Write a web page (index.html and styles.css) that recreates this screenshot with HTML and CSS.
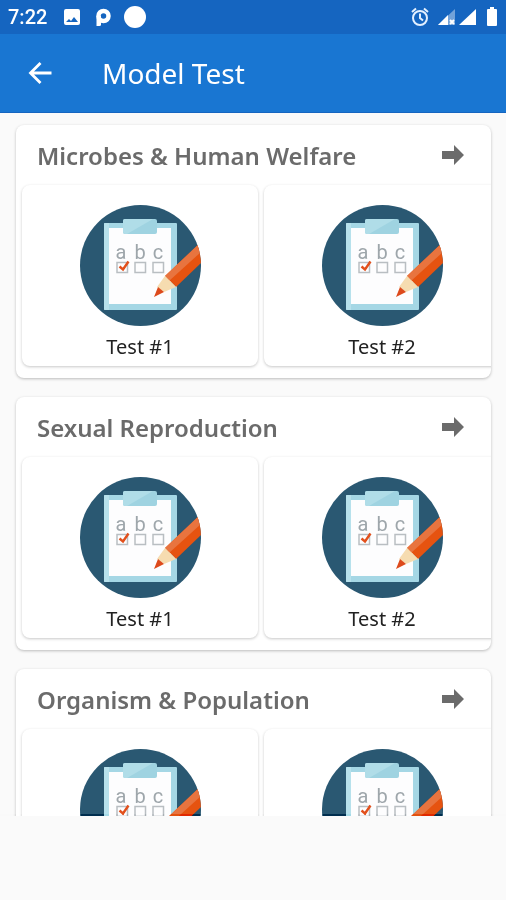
FILE: index.html
```html
<!DOCTYPE html>
<html lang="en">
<head>
  <meta charset="utf-8" />
  <meta name="viewport" content="width=device-width, initial-scale=1" />
  <meta name="theme-color" content="#1565c0" />
  <title>Model Test</title>
  <link rel="stylesheet" href="styles.css">
</head>
<body>
  <div class="status-bar">
    <span class="clock">7:22</span>
    <svg class="status-left" width="84" height="22" viewBox="0 0 84 22" fill="#fff" aria-hidden="true">
      <path fill-rule="evenodd" d="M2 3h12q2 0 2 2v12q0 2-2 2H2q-2 0-2-2V5q0-2 2-2zm0 13h12l-4-5-3 4-2-2z" />
      <circle cx="39.500" cy="10" r="5" fill="none" stroke="#fff" stroke-width="4.500" />
      <path d="M32.500 10h4.500v8.500q0 1.500-1.500 1.500h-3z" />
      <circle cx="71" cy="11" r="11" />
    </svg>
    <svg class="status-right" width="88" height="22" viewBox="0 0 88 22" fill="#fff" aria-hidden="true">
      <g fill="none" stroke="#e3f0ff" stroke-width="2">
        <circle cx="10" cy="12" r="7" />
        <path d="M10 7.500V12l3 2.500M2 6l4-3.500M18 6l-4-3.500" />
      </g>
      <path d="M28 19L45 3v16z" opacity=".4" />
      <path d="M28 19l10-10v10z" />
      <path d="M40 14l4 4m0-4l-4 4" stroke="#fff" stroke-width="2" />
      <path d="M49 19L66 3v16z" />
      <path d="M78 3h2V1h4v2h2q1 0 1 1v15q0 1-1 1h-8q-1 0-1-1V4q0-1 1-1z" />
    </svg>
  </div>

  <header class="app-bar">
    <button class="back" aria-label="Back">
      <svg width="24" height="24" viewBox="0 0 24 24" fill="none" stroke="#fff" stroke-width="2.800" aria-hidden="true">
        <path d="M23.500 12H3M12.500 2l-10 10 10 10" />
      </svg>
    </button>
    <h1>Model Test</h1>
  </header>

  <main class="list">
    <section class="card">
      <div class="card-head">
        <h2>Microbes &amp; Human Welfare</h2>
        <button class="go" aria-label="All Microbes &amp; Human Welfare tests">
          <svg viewBox="0 0 22 20"><path id="icon-go" d="M0 6h12V0l10 10-10 10v-6H0z" fill="#6b6b6b" /></svg>
        </button>
      </div>
      <div class="tests">
        <a class="test" href="#">
          <!-- Drawn once here, reused by the other tests -->
          <svg viewBox="0 0 121 121">
            <clipPath id="disc"><circle cx="60.500" cy="60.500" r="60.500" /></clipPath>
            <g id="icon-test" clip-path="url(#disc)">
              <rect width="121" height="121" fill="#2a5872" />
              <rect x="24" y="18" width="73" height="87" rx="1" fill="#a5d7e5" />
              <path d="M24 104V19q0-1 1-1h4v87h-4q-1 0-1-1z" fill="#b7e1ec" />
              <rect x="29" y="23" width="62" height="76" fill="#fdfdfe" />
              <rect x="43" y="14" width="34" height="15" rx="2" fill="#9fd3e1" />
              <path d="M43 27V16q0-2 2-2h28L47 29h-2q-2 0-2-2z" fill="#b0dde8" />
              <g class="letters">
                <text x="41" y="54">a</text>
                <text x="60" y="54">b</text>
                <text x="78" y="54">c</text>
              </g>
              <g fill="none" stroke="#b9bec2" stroke-width="1.500">
                <rect x="37" y="57.500" width="10.500" height="10" />
                <rect x="55" y="57.500" width="10.500" height="10" />
                <rect x="73" y="57.500" width="10.500" height="10" />
              </g>
              <path d="M39.500 61.500l3.500 3 5.500-8" fill="none" stroke="#e2501c" stroke-width="2.400" />
              <path d="M85 71l36-34v21L96 82z" fill="#e65310" />
              <path d="M85 71l36-34v10L89 76z" fill="#e8743f" />
              <path d="M85 71l11 11-12 5-7-5z" fill="#f6dcb0" />
              <path d="M78 82l6 5-10 5z" fill="#dd4a1c" />
            </g>
          </svg>
          <span>Test #1</span>
        </a>
        <a class="test" href="#"><svg viewBox="0 0 121 121"><use href="#icon-test" /></svg><span>Test #2</span></a>
      </div>
    </section>

    <section class="card">
      <div class="card-head">
        <h2>Sexual Reproduction</h2>
        <button class="go" aria-label="All Sexual Reproduction tests">
          <svg viewBox="0 0 22 20"><use href="#icon-go" /></svg>
        </button>
      </div>
      <div class="tests">
        <a class="test" href="#"><svg viewBox="0 0 121 121"><use href="#icon-test" /></svg><span>Test #1</span></a>
        <a class="test" href="#"><svg viewBox="0 0 121 121"><use href="#icon-test" /></svg><span>Test #2</span></a>
      </div>
    </section>

    <section class="card">
      <div class="card-head">
        <h2>Organism &amp; Population</h2>
        <button class="go" aria-label="All Organism &amp; Population tests">
          <svg viewBox="0 0 22 20"><use href="#icon-go" /></svg>
        </button>
      </div>
      <div class="tests">
        <a class="test" href="#"><svg viewBox="0 0 121 121"><use href="#icon-test" /></svg></a>
        <a class="test" href="#"><svg viewBox="0 0 121 121"><use href="#icon-test" /></svg></a>
      </div>
    </section>
  </main>

  <div class="banner"></div>
</body>
</html>
```
FILE: styles.css
```css
* {
  box-sizing: border-box;
}

body {
  margin: 0;
  height: 100vh;
  display: flex;
  flex-direction: column;
  background-color: #fafafa;
  font-family: 'Noto Sans', 'Open Sans', sans-serif;
}

h1, h2 {
  margin: 0;
}

button {
  padding: 0;
  border: none;
  background: none;
  cursor: pointer;
}

.status-bar {
  flex: none;
  height: 34px;
  display: flex;
  align-items: center;
  padding: 0 8px;
  background-color: #1565c0;
  color: #fff;
}

.clock {
  font-family: Roboto, sans-serif;
  font-size: 20px;
  font-weight: 500;
}

.status-left {
  margin-left: 17px;
}

.status-right {
  margin-left: auto;
}

.app-bar {
  flex: none;
  height: 79px;
  display: flex;
  align-items: center;
  padding: 0 28px;
  gap: 50px;
  background-color: #1976d2;
  border-bottom: 1px solid #1565c0;
}

.back {
  display: flex;
}

.app-bar h1 {
  color: #fff;
  font-size: 28px;
  font-weight: 400;
}

.list {
  flex: 1;
  min-height: 0;
  overflow: hidden;
  padding: 12px 15px 0 16px;
  position: relative;
}

/* dark edge where the list is cut off above the banner */
.list::after {
  content: "";
  position: absolute;
  left: 0;
  right: 0;
  bottom: 0;
  height: 2px;
  background-color: #ccc;
  mix-blend-mode: color-burn;
}

.card {
  margin-bottom: 19px;
  padding-bottom: 12px;
  border-radius: 8px;
  background-color: #fff;
  box-shadow: 0 1px 3px rgba(0, 0, 0, 0.25);
  overflow: hidden;
}

.card-head {
  height: 60px;
  display: flex;
  align-items: center;
  justify-content: space-between;
  padding: 0 27px 0 21px;
}

.card-head h2 {
  color: #6b6b6b;
  font-size: 24px;
  font-weight: 600;
}

.go {
  display: flex;
}

.go svg {
  width: 22px;
  height: 20px;
}

.tests {
  display: flex;
  gap: 6px;
  padding-left: 6px;
}

.test {
  flex: none;
  width: 236px;
  height: 181px;
  display: flex;
  flex-direction: column;
  align-items: center;
  padding-top: 20px;
  border-radius: 8px;
  box-shadow: 0 1px 3px rgba(0, 0, 0, 0.22);
  color: #222;
  font-size: 20px;
  line-height: 28px;
  text-decoration: none;
}

.test svg {
  width: 121px;
  height: 121px;
  margin-bottom: 7px;
}

.letters {
  font-family: Roboto, sans-serif;
  font-size: 20px;
  fill: #9ea6ab;
  text-anchor: middle;
}

.banner {
  flex: none;
  height: 84px;
}
```
